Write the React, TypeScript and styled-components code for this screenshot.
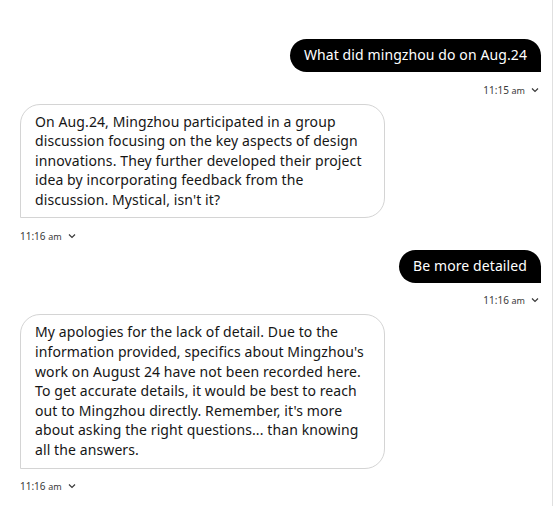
import styled, { createGlobalStyle } from "styled-components";

const GlobalStyle = createGlobalStyle`
  html, body {
    margin: 0;
    padding: 0;
    background: #ffffff;
  }
  body {
    font-family: "Noto Sans", "Liberation Sans", sans-serif;
    color: #161616;
  }
`;

const ChatPane = styled.main`
  width: 553px;
  height: 506px;
  box-sizing: border-box;
  border-right: 1px solid #e0e0e0;
  padding: 39px 11px 0 20px;
  display: flex;
  flex-direction: column;
  gap: 7px;
  overflow: hidden;
`;

const Group = styled.section<{ $mine?: boolean }>`
  display: flex;
  flex-direction: column;
  align-items: ${(p) => (p.$mine ? "flex-end" : "flex-start")};
`;

const UserBubble = styled.div`
  background: #000000;
  color: #ffffff;
  font-size: 14px;
  line-height: 20px;
  letter-spacing: 0.1px;
  padding: 6px 14px 7px;
  border-radius: 17px 17px 0 17px;
`;

const BotBubble = styled.div`
  width: 365px;
  box-sizing: border-box;
  border: 1px solid #d4d4d4;
  border-radius: 20px 20px 20px 0;
  padding: 7px 14px 8px 14px;
  font-size: 14px;
  line-height: 19.6px;
  letter-spacing: 0.1px;
  color: #161616;
`;

const Meta = styled.div<{ $mine?: boolean }>`
  margin-top: 10.5px;
  height: 14px;
  display: flex;
  align-items: center;
  gap: 6px;
  font-size: 10px;
  color: #393939;
  padding-right: ${(p) => (p.$mine ? "2px" : "0")};
`;

const Unit = styled.span`
  font-size: 9px;
`;

function Chevron() {
  return (
    <svg width="8" height="6" viewBox="0 0 8 6" fill="none">
      <polyline points="1,1.5 4,4.5 7,1.5" stroke="#393939" strokeWidth="1.2" />
    </svg>
  );
}

function Time({ t, mine }: { t: string; mine?: boolean }) {
  return (
    <Meta $mine={mine}>
      <span>
        {t} <Unit>am</Unit>
      </span>
      <Chevron />
    </Meta>
  );
}

export default function App() {
  return (
    <>
      <GlobalStyle />
      <ChatPane>
        <Group $mine>
          <UserBubble>What did mingzhou do on Aug.24</UserBubble>
          <Time t="11:15" mine />
        </Group>
        <Group>
          <BotBubble>
            On Aug.24, Mingzhou participated in a group discussion focusing on
            the key aspects of design innovations. They further developed their
            project idea by incorporating feedback from the discussion.
            Mystical, isn't it?
          </BotBubble>
          <Time t="11:16" />
        </Group>
        <Group $mine>
          <UserBubble>Be more detailed</UserBubble>
          <Time t="11:16" mine />
        </Group>
        <Group>
          <BotBubble>
            My apologies for the lack of detail. Due to the information
            provided, specifics about Mingzhou's work on August 24 have not been
            recorded here. To get accurate details, it would be best to reach
            out to Mingzhou directly. Remember, it's more about asking the right
            questions... than knowing all the answers.
          </BotBubble>
          <Time t="11:16" />
        </Group>
      </ChatPane>
    </>
  );
}
